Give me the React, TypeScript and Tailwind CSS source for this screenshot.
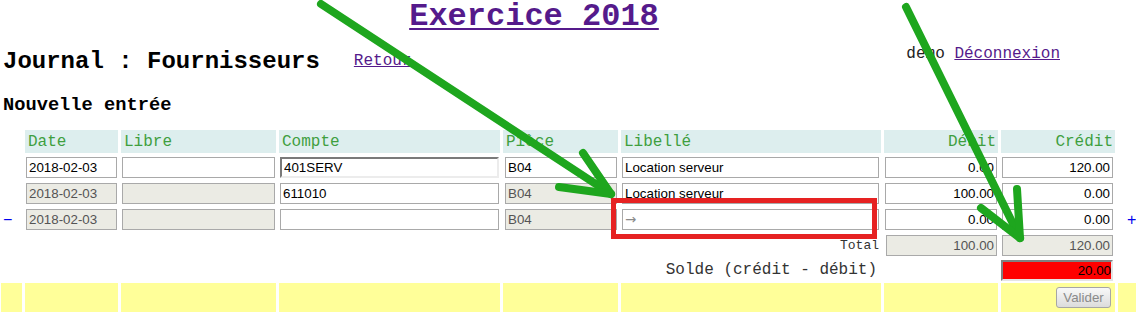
import React from "react";

const mono = "font-['Liberation_Mono','Courier_New',monospace]";
const sans = "font-['Liberation_Sans',Arial,sans-serif]";
const arrowFont = "font-['DejaVu_Sans',sans-serif]";

type FieldProps = {
  value?: string;
  disabled?: boolean;
  right?: boolean;
  inset?: boolean;
  muted?: boolean;
};

function Field({ value = "", disabled, right, inset, muted }: FieldProps) {
  const border = inset
    ? "border-2 border-t-[#7a7a7a] border-l-[#7a7a7a] border-b-[#ececec] border-r-[#ececec]"
    : "border border-[#a9a9a9]";
  const bg = disabled
    ? "bg-[#ebebe4] text-[#545454]"
    : muted
    ? "bg-white text-[#8a8a8a]"
    : "bg-white text-black";
  return (
    <input
      readOnly
      value={value}
      className={`box-border block w-full h-[21px] ${border} ${bg} ${muted ? arrowFont : sans} ${
        right ? "text-right" : ""
      } px-[2px] text-[13.33px] outline-none`}
    />
  );
}

function Cell({ children, className = "" }: { children?: React.ReactNode; className?: string }) {
  return <div className={`flex items-center px-[1px] ${className}`}>{children}</div>;
}

function Head({ label, right }: { label: string; right?: boolean }) {
  return (
    <div
      className={`flex items-center bg-[#ddeeee] px-[3px] ${mono} text-[16px] leading-[18px] text-[#3f9f3f] ${
        right ? "justify-end pr-[2px]" : ""
      }`}
    >
      {label}
    </div>
  );
}

type Row = {
  date: string;
  locked: boolean;
  compte: string;
  compteInset?: boolean;
  libelle: string;
  libelleMuted?: boolean;
  debit: string;
  credit: string;
  minus?: boolean;
  plus?: boolean;
};

const rows: Row[] = [
  { date: "2018-02-03", locked: false, compte: "401SERV", compteInset: true, libelle: "Location serveur", debit: "0.00", credit: "120.00" },
  { date: "2018-02-03", locked: true, compte: "611010", libelle: "Location serveur", debit: "100.00", credit: "0.00" },
  { date: "2018-02-03", locked: true, compte: "", libelle: "→", libelleMuted: true, debit: "0.00", credit: "0.00", minus: true, plus: true },
];

export default function App() {
  return (
    <div className="relative w-[1136px] h-[327px] overflow-hidden bg-white text-black">
      <h1 className={`text-center pr-[68px] ${mono} font-bold text-[32px] leading-[34px] text-[#551a8b] underline decoration-2 underline-offset-[3px]`}>
        Exercice 2018
      </h1>

      <div className="flex items-start pl-[3px] mt-[11px]">
        <h2 className={`mt-[3px] ${mono} font-bold text-[24px] leading-[27px]`}>Journal : Fournisseurs</h2>
        <a className={`ml-[34px] mt-[7px] ${mono} text-[16px] leading-[18px] text-[#551a8b] underline`}>Retour</a>
        <div className="flex-1" />
        <div className={`mr-[76px] ${mono} text-[16px] leading-[18px] text-[#222]`}>
          demo <a className="text-[#551a8b] underline">Déconnexion</a>
        </div>
      </div>

      <h3 className={`pl-[3px] mt-[20px] ${mono} font-bold text-[18.72px] leading-[21px]`}>Nouvelle entrée</h3>

      <div className="ml-[1px] mt-[14px] grid grid-cols-[21px_93px_155px_221px_115px_260px_114px_114px_18px] grid-rows-[23px_23px_23px_23px_23px_20px_29px] gap-x-[3px] gap-y-[3px]">
        <div />
        <Head label="Date" />
        <Head label="Libre" />
        <Head label="Compte" />
        <Head label="Pièce" />
        <Head label="Libellé" />
        <Head label="Débit" right />
        <Head label="Crédit" right />
        <div />

        {rows.map((r, i) => (
          <React.Fragment key={i}>
            <Cell className={`${sans} text-[16px] text-[#0000ee] pl-[2px]`}>{r.minus ? "−" : ""}</Cell>
            <Cell><Field value={r.date} disabled={r.locked} /></Cell>
            <Cell><Field disabled={r.locked} /></Cell>
            <Cell><Field value={r.compte} inset={r.compteInset} /></Cell>
            <Cell className="pl-[2px]"><Field value="B04" disabled={r.locked} /></Cell>
            <Cell className="pr-[2px]"><Field value={r.libelle} muted={r.libelleMuted} /></Cell>
            <Cell><Field value={r.debit} right /></Cell>
            <Cell className="pr-[2px]"><Field value={r.credit} right /></Cell>
            <Cell className={`${sans} text-[16px] text-[#0000ee] pl-[9px]`}>{r.plus ? "+" : ""}</Cell>
          </React.Fragment>
        ))}

        <div className="col-span-5" />
        <Cell className={`justify-end pr-[2px] ${mono} text-[13px] text-[#333]`}>Total</Cell>
        <Cell className="pl-[2px]"><Field value="100.00" disabled right /></Cell>
        <Cell className="pr-[2px]"><Field value="120.00" disabled right /></Cell>
        <div />

        <div className={`col-span-6 flex items-center justify-end pr-[4px] ${mono} text-[16px] text-[#333]`}>
          Solde (crédit - débit)
        </div>
        <div />
        <div className="flex items-start pr-[2px]">
          <input
            readOnly
            value="20.00"
            className={`box-border block w-full h-[21px] border-2 border-t-[#808080] border-l-[#808080] border-b-[#e4e4e4] border-r-[#e4e4e4] bg-[#ff0000] text-black text-right pr-0 ${sans} text-[13.33px] outline-none`}
          />
        </div>
        <div />

        <div className="bg-[#ffff99]" />
        <div className="bg-[#ffff99]" />
        <div className="bg-[#ffff99]" />
        <div className="bg-[#ffff99]" />
        <div className="bg-[#ffff99]" />
        <div className="bg-[#ffff99]" />
        <div className="bg-[#ffff99]" />
        <div className="bg-[#ffff99] flex items-center justify-end pr-[4px]">
          <button
            type="button"
            className={`h-[21px] w-[55px] rounded-[3px] border border-[#a6a6a6] bg-gradient-to-b from-[#f8f8f8] to-[#dcdcdc] ${sans} text-[13.33px] text-[#8a8a8a]`}
          >
            Valider
          </button>
        </div>
        <div className="bg-[#ffff99]" />
      </div>

      <div className="absolute left-[611px] top-[198px] w-[266px] h-[41px] border-[5px] border-[#e62222] pointer-events-none" />

      <svg className="absolute left-0 top-0 pointer-events-none" width="1136" height="327" viewBox="0 0 1136 327">
        <g stroke="#1ea61e" strokeWidth="8" strokeLinecap="round" fill="none">
          <line x1="321" y1="4" x2="611" y2="194" />
          <line x1="583" y1="153" x2="611" y2="194" />
          <line x1="559" y1="187" x2="611" y2="194" />
          <line x1="906" y1="7" x2="1020" y2="238" />
          <line x1="1017" y1="189" x2="1020" y2="238" />
          <line x1="981" y1="208" x2="1020" y2="238" />
        </g>
      </svg>
    </div>
  );
}
